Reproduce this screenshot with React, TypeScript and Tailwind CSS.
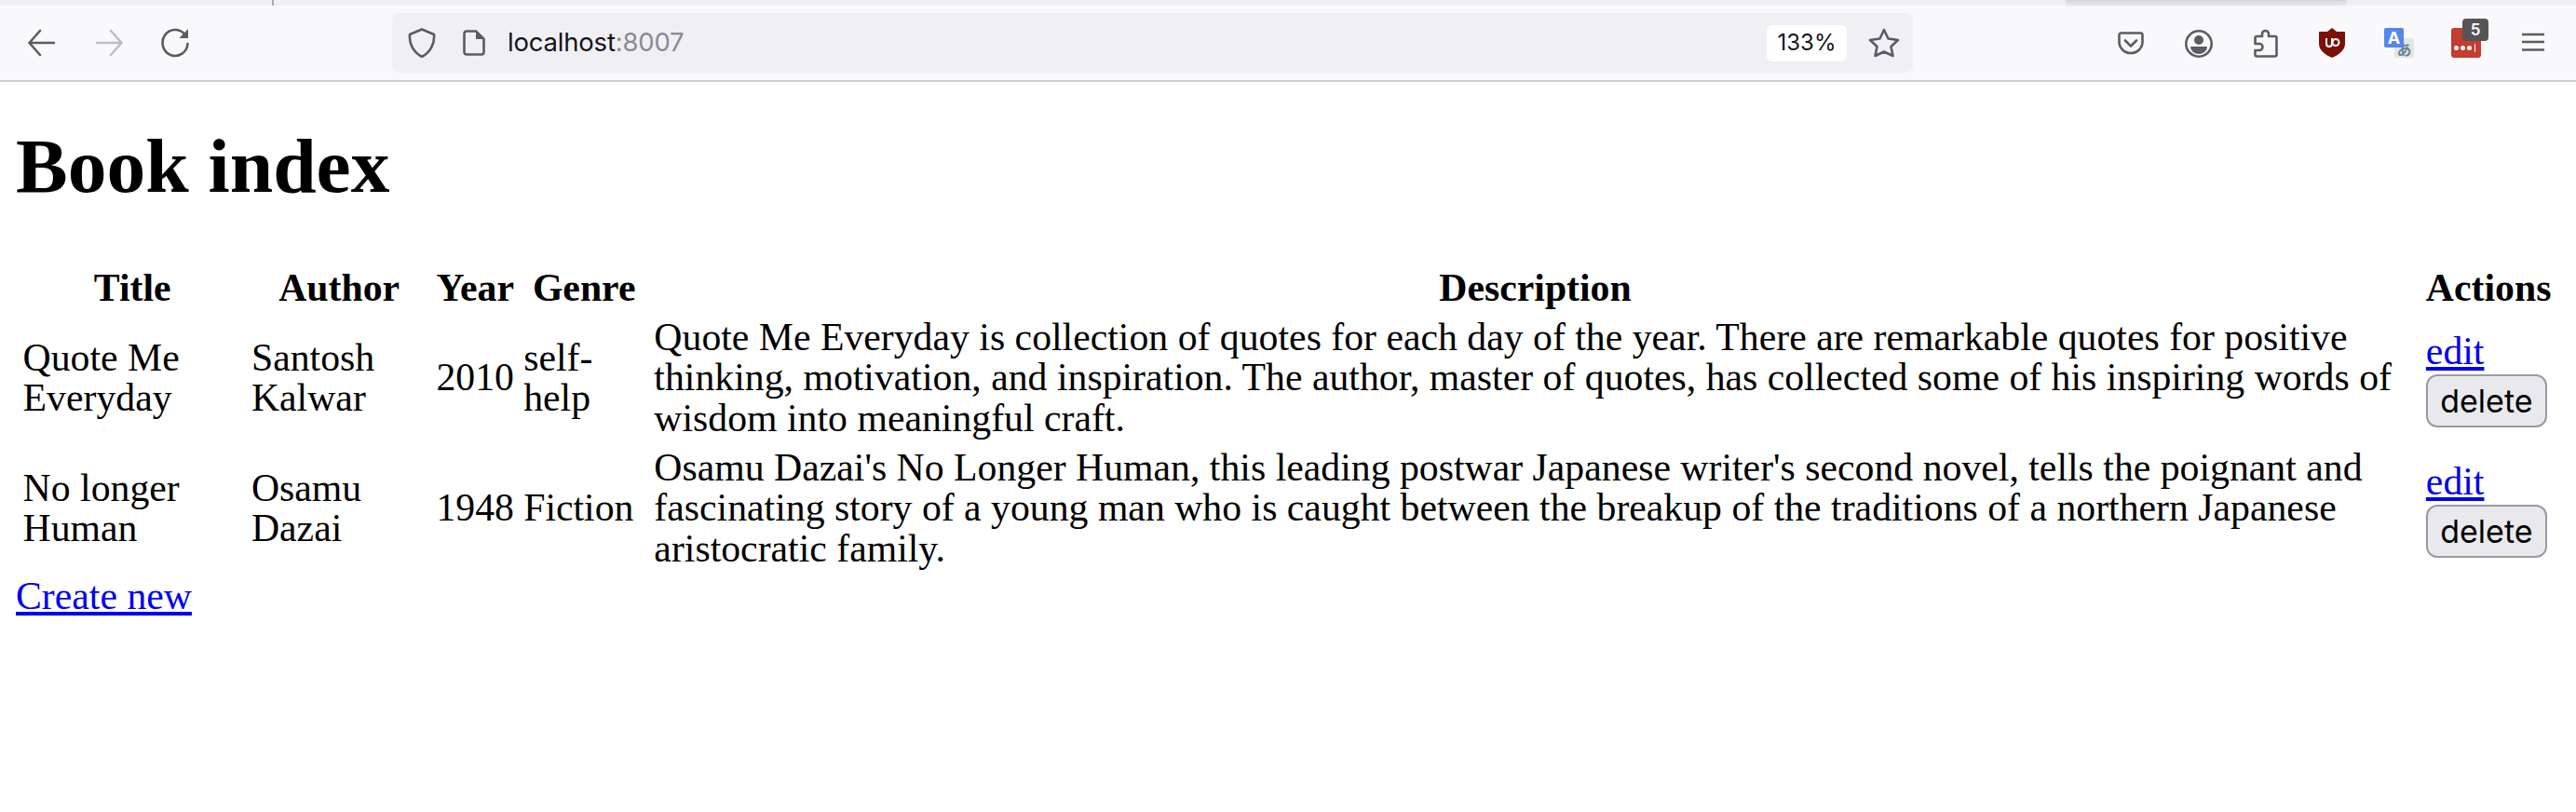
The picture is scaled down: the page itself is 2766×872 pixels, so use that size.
const iconCls = "fill-none stroke-[#5b5b66]";

const books = [
	{
		title: "Quote Me Everyday",
		author: "Santosh Kalwar",
		year: 2010,
		genre: "self-help",
		description:
			"Quote Me Everyday is collection of quotes for each day of the year. There are remarkable quotes for positive thinking, motivation, and inspiration. The author, master of quotes, has collected some of his inspiring words of wisdom into meaningful craft.",
	},
	{
		title: "No longer Human",
		author: "Osamu Dazai",
		year: 1948,
		genre: "Fiction",
		description:
			"Osamu Dazai's No Longer Human, this leading postwar Japanese writer's second novel, tells the poignant and fascinating story of a young man who is caught between the breakup of the traditions of a northern Japanese aristocratic family.",
	},
];

const Toolbar = () => (
	<div className="h-[88px] bg-[#f9f9fb] border-b-2 border-[#cccccc] relative font-['Inter',sans-serif]">
		<div className="h-[6px] bg-[#f0f0f4] relative">
			<div className="absolute left-[292px] top-0 w-[2px] h-[6px] bg-[#a8a8ae]" />
			<div className="absolute left-[2218px] top-0 w-[301px] h-[2px] bg-[#d8d8dc] shadow-[0_2px_4px_rgba(0,0,0,0.2)]" />
		</div>
		<div className="flex items-center h-[80px]">
			<div className="flex items-center w-[421px] pl-[30px] gap-[44px]">
				<svg width="29" height="38" viewBox="0 0 29 38" className={iconCls} strokeWidth="2.6" strokeLinecap="round" strokeLinejoin="round">
					<path d="M1.5 19H28M13 6 1.5 19 13 32" />
				</svg>
				<svg width="29" height="38" viewBox="0 0 29 38" className="fill-none stroke-[#bdbdc2]" strokeWidth="2.6" strokeLinecap="round" strokeLinejoin="round">
					<path d="M1 19H27.500M16 6 27.500 19 16 32" />
				</svg>
				<svg width="30" height="32" viewBox="0 0 30 32" strokeLinecap="round" className="-ml-[3px]">
					<path d="M25 6.500A13.500 14 0 1 0 28.500 17" className={iconCls} strokeWidth="2.6" />
					<path d="M19.500 11H29V1Z" fill="#5b5b66" />
				</svg>
			</div>
			<div className="flex items-center w-[1633px] h-[64px] bg-[#f0f0f4] rounded-[8px] pl-[17px] pr-[14px]">
				<svg width="30" height="32" viewBox="0 0 30 32" className={iconCls} strokeWidth="2.6" strokeLinejoin="round">
					<path d="M15 1.500 28 7C29 17 24 26 15 31 6 26 1 17 2 7Z" />
				</svg>
				<svg width="24" height="28" viewBox="0 0 24 28" strokeLinejoin="round" className="ml-[29px]">
					<path d="M4 1.500H14L22.500 10V24A2.500 2.500 0 0 1 20 26.500H4A2.500 2.500 0 0 1 1.500 24V4A2.500 2.500 0 0 1 4 1.500Z" className={iconCls} strokeWidth="2.6" />
					<path d="M14 1.500 22.500 10H14Z" fill="#5b5b66" />
				</svg>
				<span className="ml-[24px] text-[27.500px] text-[#15141a] tracking-[-0.2px]">
					localhost<span className="text-[#8a8a90]">:8007</span>
				</span>
				<span className="ml-auto w-[86px] h-[39px] bg-white rounded-[6px] flex items-center justify-center text-[24px] text-[#15141a]">
					133%
				</span>
				<svg width="34" height="32" viewBox="0 0 34 32" className={`${iconCls} ml-[23px]`} strokeWidth="2.6" strokeLinejoin="round">
					<path d="M17 2 21.500 11.500 32 13 24.500 20 26.500 30 17 25.500 7.500 30 9.500 20 2 13 12.500 11.500Z" />
				</svg>
			</div>
			<div className="relative flex-1 h-full">
				<svg width="28" height="25" viewBox="0 0 28 25" className={`${iconCls} absolute left-[220px] top-[28px]`} strokeWidth="2.6" strokeLinecap="round" strokeLinejoin="round">
					<path d="M3.500 1.500H24.500A2 2 0 0 1 26.500 3.500V11A12.500 12 0 0 1 1.500 11V3.500A2 2 0 0 1 3.500 1.500Z" />
					<path d="M8 9.500 14 15.500 20 9.500" />
				</svg>
				<svg width="30" height="30" viewBox="0 0 30 30" className="absolute left-[292px] top-[26px]">
					<circle cx="15" cy="15" r="13.700" className={iconCls} strokeWidth="2.6" />
					<circle cx="15" cy="11" r="5" fill="#5b5b66" />
					<path d="M6 18H24A9 8 0 0 1 6 18Z" fill="#5b5b66" />
				</svg>
				<svg width="26" height="31" viewBox="0 0 26 31" className={`${iconCls} absolute left-[366px] top-[25px]`} strokeWidth="2.6" strokeLinejoin="round">
					<path d="M9 8V5.500A3.500 3.500 0 0 1 16 5.500V8H23A1.500 1.500 0 0 1 24.500 9.500V28A1.500 1.500 0 0 1 23 29.500H3A1.500 1.500 0 0 1 1.500 28V23H6A3.500 3.500 0 0 0 6 16H1.500V9.500A1.500 1.500 0 0 1 3 8Z" />
				</svg>
				<svg width="28" height="32" viewBox="0 0 28 32" className="absolute left-[436px] top-[24px]">
					<path d="M14 0 19 4 28 4V17C28 24 21 29 14 32 7 29 0 24 0 17V4L9 4Z" fill="#7b1009" />
					<path d="M8 11V17A3 3 0 0 0 14 17V11" fill="none" stroke="#fff" strokeWidth="2" />
					<circle cx="18" cy="15.500" r="3.500" fill="none" stroke="#fff" strokeWidth="2" />
				</svg>
				<div className="absolute left-[517px] top-[35px] w-[21px] h-[21px] bg-[#e4e6e6] rounded-[2px] flex items-center justify-center text-[16px] leading-none text-[#68828f] font-['Noto_Sans_CJK_JP',sans-serif] font-bold">
					あ
				</div>
				<div className="absolute left-[506px] top-[24px] w-[21px] h-[21px] bg-[#5487ea] rounded-[2px] flex items-center justify-center text-[18px] leading-none text-white font-bold">
					A
				</div>
				<div className="absolute left-[578px] top-[24px] w-[32px] h-[32px] bg-[#c53c30] rounded-[3px] flex items-center gap-[2px] pl-[3px] pt-[10px]">
					<span className="w-[5px] h-[5px] rounded-full bg-white" />
					<span className="w-[5px] h-[5px] rounded-full bg-white" />
					<span className="w-[5px] h-[5px] rounded-full bg-white" />
					<span className="w-[1px] h-[9px] bg-white ml-[1px]" />
				</div>
				<div className="absolute left-[590px] top-[14px] w-[28px] h-[24px] bg-[#555555] rounded-[4px] flex items-center justify-center text-[17px] leading-none font-semibold text-white">
					5
				</div>
				<svg width="24" height="20" viewBox="0 0 24 20" className={`${iconCls} absolute left-[654px] top-[29px]`} strokeWidth="2.6">
					<path d="M0 2H24M0 10H24M0 18.500H24" />
				</svg>
			</div>
		</div>
	</div>
);

export default function App() {
	return (
		<div className="min-h-[872px] bg-white text-black font-['Liberation_Serif',serif] text-[41.750px] leading-[43.300px]">
			<Toolbar />
			<div className="pl-[17px] pr-[19px]">
				<h1 className="text-[83.500px] leading-[96px] font-bold pt-[42px] pb-[54px]">Book index</h1>
				<table className="w-full border-separate border-spacing-[5.300px]">
					<thead>
						<tr>
							{["Title", "Author", "Year", "Genre", "Description", "Actions"].map((h) => (
								<th key={h} className="p-[2.600px] font-bold text-center">
									{h}
								</th>
							))}
						</tr>
					</thead>
					<tbody>
						{books.map((book) => (
							<tr key={book.title}>
								<td className="p-[2.600px]">{book.title}</td>
								<td className="p-[2.600px]">{book.author}</td>
								<td className="p-[2.600px]">{book.year}</td>
								<td className="p-[2.600px]">{book.genre}</td>
								<td className="p-[2.600px]">{book.description}</td>
								<td className="px-[2.600px] pt-[6px] pb-[2.600px]">
									<a href="#" className="block text-[#0000ee] underline">
										edit
									</a>
									<button className="block mt-[3px] w-[130px] h-[57px] bg-[#e9e9ed] border-2 border-[#9a9aa5] rounded-[12px] font-['Inter',sans-serif] text-[34px] leading-none text-black">
										delete
									</button>
								</td>
							</tr>
						))}
					</tbody>
				</table>
				<a href="#" className="inline-block -mt-[2px] text-[#0000ee] underline">
					Create new
				</a>
			</div>
		</div>
	);
}
